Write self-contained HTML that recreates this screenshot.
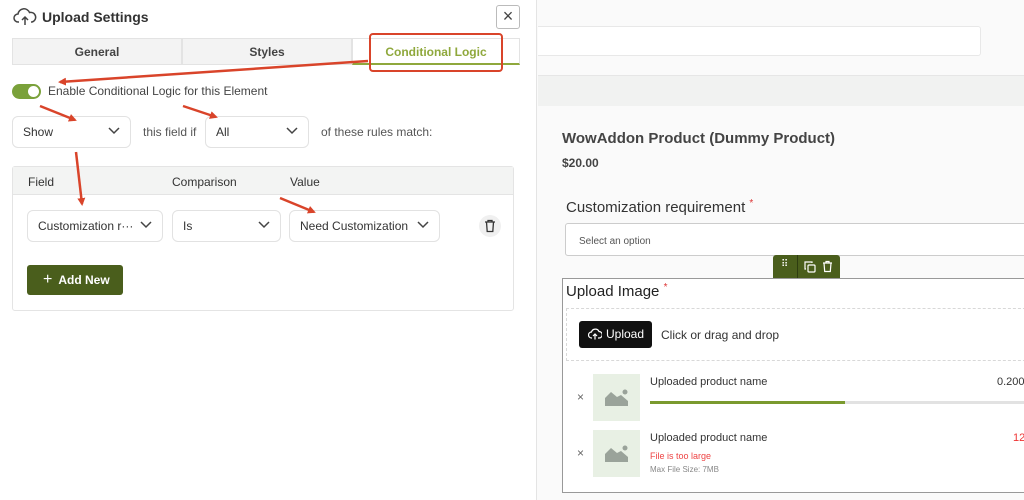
<!DOCTYPE html>
<html><head><meta charset="utf-8"><style>
*{box-sizing:border-box;margin:0;padding:0}
body{width:1024px;height:500px;overflow:hidden;background:#fafafa;font-family:"Liberation Sans",sans-serif;color:#333;position:relative;font-size:12px}
.abs{position:absolute}
.left{left:0;top:0;width:537px;height:500px;background:#fff;border-right:1px solid #e4e4e4}
.sel{position:absolute;border:1px solid #e2e2e2;border-radius:6px;background:#fff;height:32px;font-size:12px;color:#333;line-height:30px;padding-left:10px}
.sel .ch{position:absolute;right:10px;top:10px;width:12px;height:8px}
.tab{position:absolute;top:38px;height:27px;background:#f3f3f3;border:1px solid #e3e3e3;text-align:center;line-height:26px;font-weight:bold;font-size:12px;color:#444}
</style></head><body>
<div class="abs left">
  <svg class="abs" style="left:13px;top:7px" width="24" height="20" viewBox="0 0 24 20" fill="none" stroke="#444" stroke-width="1.5"><path d="M6 15H5a4 4 0 0 1 0-8 6 6 0 0 1 11.5-1.5A4.5 4.5 0 0 1 19 15h-1"/><path d="M12 18v-8M9 13l3-3 3 3"/></svg>
  <div class="abs" style="left:42px;top:9px;font-size:14px;font-weight:bold;color:#333">Upload Settings</div>
  <div class="abs" style="left:496px;top:5px;width:24px;height:24px;border:1px solid #bbb;border-radius:3px;text-align:center;line-height:21px;font-size:18px;color:#444">×</div>
  <div class="tab" style="left:12px;width:170px">General</div>
  <div class="tab" style="left:182px;width:170px">Styles</div>
  <div class="tab" style="left:352px;width:168px;background:#fff;border-bottom:2px solid #8fa83c;color:#8fa83c">Conditional Logic</div>
  <div class="abs" style="left:369px;top:33px;width:134px;height:39px;border:2.5px solid #d9442a;border-radius:4px"></div>
  <div class="abs" style="left:12px;top:84px;width:29px;height:15px;border-radius:8px;background:#7aa13a"><div class="abs" style="right:2px;top:2px;width:11px;height:11px;border-radius:50%;background:#fff"></div></div>
  <div class="abs" style="left:48px;top:84px;font-size:12px;color:#444">Enable Conditional Logic for this Element</div>
  <div class="sel" style="left:12px;top:116px;width:119px">Show<svg class="ch" viewBox="0 0 12 8"><path d="M1 1l5 5 5-5" fill="none" stroke="#444" stroke-width="1.5"/></svg></div>
  <div class="abs" style="left:143px;top:125px;color:#555">this field if</div>
  <div class="sel" style="left:205px;top:116px;width:104px">All<svg class="ch" viewBox="0 0 12 8"><path d="M1 1l5 5 5-5" fill="none" stroke="#444" stroke-width="1.5"/></svg></div>
  <div class="abs" style="left:321px;top:125px;color:#555">of these rules match:</div>
  <div class="abs" style="left:12px;top:166px;width:502px;height:145px;border:1px solid #e4e4e4;border-radius:3px">
    <div style="height:28px;background:#f3f4f3;border-bottom:1px solid #e4e4e4;position:relative">
      <span class="abs" style="left:15px;top:8px">Field</span>
      <span class="abs" style="left:159px;top:8px">Comparison</span>
      <span class="abs" style="left:277px;top:8px">Value</span>
    </div>
  </div>
  <div class="sel" style="left:27px;top:210px;width:136px">Customization r···<svg class="ch" viewBox="0 0 12 8"><path d="M1 1l5 5 5-5" fill="none" stroke="#444" stroke-width="1.5"/></svg></div>
  <div class="sel" style="left:172px;top:210px;width:109px">Is<svg class="ch" viewBox="0 0 12 8"><path d="M1 1l5 5 5-5" fill="none" stroke="#444" stroke-width="1.5"/></svg></div>
  <div class="sel" style="left:289px;top:210px;width:151px">Need Customization<svg class="ch" viewBox="0 0 12 8"><path d="M1 1l5 5 5-5" fill="none" stroke="#444" stroke-width="1.5"/></svg></div>
  <div class="abs" style="left:479px;top:215px;width:22px;height:22px;border-radius:50%;background:#f0f0f0"><svg class="abs" style="left:5px;top:4px" width="12" height="14" viewBox="0 0 12 14" fill="none" stroke="#333" stroke-width="1.3"><path d="M1 3h10M4 3V1.5h4V3M2.5 3l.7 9.5h5.6L9.5 3"/></svg></div>
  <div class="abs" style="left:27px;top:265px;width:96px;height:30px;background:#4a5e1c;border-radius:3px;color:#fff;font-weight:bold;font-size:12px;line-height:30px;padding-left:16px"><span style="font-size:16px;font-weight:normal;margin-right:6px">+</span>Add New</div>
</div>
<div class="abs" style="left:538px;top:26px;width:443px;height:30px;background:#fff;border:1px solid #e8e8e8;border-left:none;border-radius:0 3px 3px 0"></div>
<div class="abs" style="left:538px;top:75px;width:486px;height:31px;background:#f1f2f1;border-top:1px solid #e6e6e6"></div>
<div class="abs" style="left:562px;top:130px;font-size:15px;font-weight:bold;color:#444">WowAddon Product (Dummy Product)</div>
<div class="abs" style="left:562px;top:156px;font-size:12px;font-weight:bold;color:#444">$20.00</div>
<div class="abs" style="left:566px;top:198px;font-size:15px;color:#333">Customization requirement <sup style="color:#d33;font-size:10px">*</sup></div>
<div class="abs" style="left:565px;top:223px;width:470px;height:33px;background:#fff;border:1px solid #ccc;border-radius:3px;font-size:10px;color:#555;padding:12px 0 0 13px">Select an option</div>
<div class="abs" style="left:773px;top:255px;width:67px;height:23px;background:#4a5e1c;border-radius:3px 3px 0 0"><span class="abs" style="left:8px;top:4px;color:#fff;font-size:10px">⠿</span><div class="abs" style="left:24px;top:0;width:1px;height:23px;background:#2e3d10"></div>
<svg class="abs" style="left:31px;top:6px" width="12" height="12" viewBox="0 0 12 12" fill="none" stroke="#fff" stroke-width="1.2"><rect x="4" y="4" width="7" height="7" rx="1"/><path d="M2 8H1V1h7v1"/></svg>
<svg class="abs" style="left:49px;top:5px" width="11" height="13" viewBox="0 0 11 13" fill="none" stroke="#fff" stroke-width="1.2"><path d="M1 3h9M4 3V1.5h3V3M2 3l.7 8.5h5.6L9 3"/></svg></div>
<div class="abs" style="left:562px;top:278px;width:470px;height:215px;border:1px solid #999;background:#fff"></div>
<div class="abs" style="left:566px;top:282px;font-size:15px;color:#222">Upload Image <sup style="color:#d33;font-size:10px">*</sup></div>
<div class="abs" style="left:566px;top:308px;width:470px;height:53px;border:1px dashed #d8d8d8"></div>
<div class="abs" style="left:579px;top:321px;width:73px;height:27px;background:#111;border-radius:3px;color:#fff;font-size:12px;line-height:27px;padding-left:9px"><svg style="vertical-align:-3px;margin-right:4px" width="14" height="14" viewBox="0 0 14 14" fill="none" stroke="#fff" stroke-width="1.2"><path d="M4 11H3.5a3 3 0 0 1 0-6 4 4 0 0 1 7.5-.5A3 3 0 0 1 11 11h-1"/><path d="M7 12.5V7M5 9l2-2 2 2"/></svg>Upload</div>
<div class="abs" style="left:661px;top:328px;font-size:12px;color:#333">Click or drag and drop</div>
<div class="abs" style="left:577px;top:390px;color:#666;font-size:12px">×</div>
<div class="abs" style="left:593px;top:374px;width:47px;height:47px;background:#e8f0e4"><svg class="abs" style="left:12px;top:14px" width="24" height="18" viewBox="0 0 24 18"><circle cx="20" cy="4" r="2.5" fill="#9aa39a"/><path d="M0 18L0 10 6 4 12 9 16 7 23 13 23 18Z" fill="#9aa39a"/></svg></div>
<div class="abs" style="left:650px;top:376px;font-size:11px;color:#333">Uploaded product name</div>
<div class="abs" style="left:997px;top:376px;font-size:11px;color:#333">0.200</div>
<div class="abs" style="left:650px;top:401px;width:380px;height:3px;background:#e2e2e2"><div style="width:195px;height:3px;background:#7a9a2e"></div></div>
<div class="abs" style="left:577px;top:446px;color:#666;font-size:12px">×</div>
<div class="abs" style="left:593px;top:430px;width:47px;height:47px;background:#e8f0e4"><svg class="abs" style="left:12px;top:14px" width="24" height="18" viewBox="0 0 24 18"><circle cx="20" cy="4" r="2.5" fill="#9aa39a"/><path d="M0 18L0 10 6 4 12 9 16 7 23 13 23 18Z" fill="#9aa39a"/></svg></div>
<div class="abs" style="left:650px;top:432px;font-size:11px;color:#333">Uploaded product name</div>
<div class="abs" style="left:1013px;top:432px;font-size:11px;color:#e33">12</div>
<div class="abs" style="left:650px;top:451px;font-size:9px;color:#e44">File is too large</div>
<div class="abs" style="left:650px;top:465px;font-size:8px;color:#888">Max File Size: 7MB</div>
<svg class="abs" style="left:0;top:0" width="540" height="260">
<defs><marker id="a" markerWidth="8" markerHeight="8" refX="6" refY="4" orient="auto" markerUnits="userSpaceOnUse"><path d="M0 0L8 4 0 8Z" fill="#d9442a"/></marker></defs>
<g stroke="#d9442a" stroke-width="2.5" fill="none" marker-end="url(#a)">
<path d="M368 61L60 82"/><path d="M40 106L75 120"/><path d="M183 106L216 117"/><path d="M76 152L82 204"/><path d="M280 198L314 212"/>
</g></svg>
</body></html>
